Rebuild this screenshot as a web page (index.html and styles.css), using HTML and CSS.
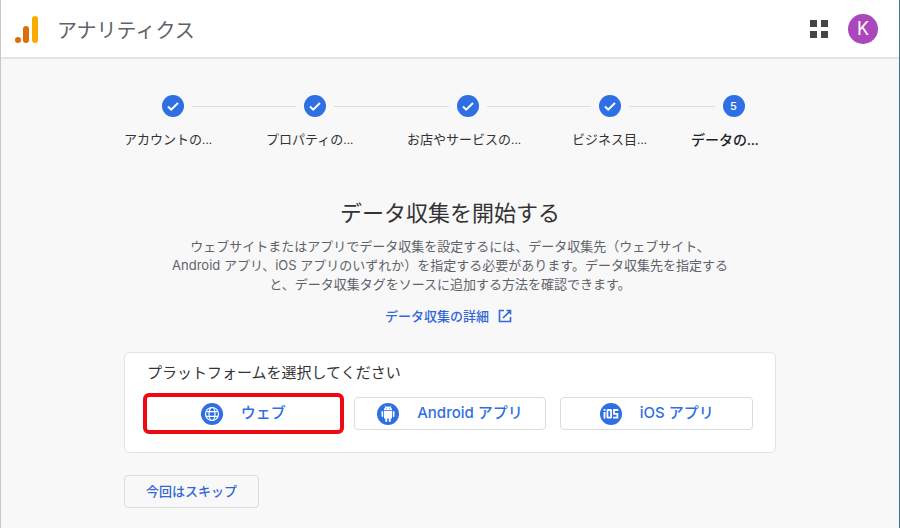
FILE: index.html
```html
<!DOCTYPE html>
<html lang="ja">

<head>
	<meta charset="UTF-8">
	<meta name="viewport" content="width=device-width, initial-scale=1.0">
	<title>アナリティクス</title>
	<link rel="stylesheet" href="styles.css">
</head>

<body>
	<header class="header">
		<svg class="logo" width="24" height="28" viewBox="0 0 24 28">
			<circle cx="3" cy="24" r="3" fill="#dd6f0b" />
			<rect x="8" y="10" width="6" height="17" rx="3" fill="#dd6f0b" />
			<rect x="17" y="0" width="6" height="27" rx="3" fill="#f9ab00" />
		</svg>
		<span class="brand">アナリティクス</span>
		<button class="apps" type="button" aria-label="アプリ">
			<svg width="18" height="18" viewBox="0 0 18 18" fill="#444">
				<rect x="0" y="0" width="7" height="7" />
				<rect x="11" y="0" width="7" height="7" />
				<rect x="0" y="11" width="7" height="7" />
				<rect x="11" y="11" width="7" height="7" />
			</svg>
		</button>
		<button class="avatar" type="button">K</button>
	</header>

	<main class="main">
		<ol class="steps">
			<li class="step">
				<div class="mark"><span class="dot"><svg width="14" height="14" viewBox="0 0 14 14"><path d="M2 7.5l3.2 3.2L12 4" /></svg></span></div>
				<span class="label">アカウントの...</span>
			</li>
			<li class="step">
				<div class="mark"><span class="dot"><svg width="14" height="14" viewBox="0 0 14 14"><path d="M2 7.5l3.2 3.2L12 4" /></svg></span></div>
				<span class="label">プロパティの...</span>
			</li>
			<li class="step">
				<div class="mark"><span class="dot"><svg width="14" height="14" viewBox="0 0 14 14"><path d="M2 7.5l3.2 3.2L12 4" /></svg></span></div>
				<span class="label">お店やサービスの...</span>
			</li>
			<li class="step">
				<div class="mark"><span class="dot"><svg width="14" height="14" viewBox="0 0 14 14"><path d="M2 7.5l3.2 3.2L12 4" /></svg></span></div>
				<span class="label">ビジネス目...</span>
			</li>
			<li class="step current">
				<div class="mark"><span class="dot">5</span></div>
				<span class="label">データの...</span>
			</li>
		</ol>

		<h1>データ収集を開始する</h1>
		<p class="lead">
			ウェブサイトまたはアプリでデータ収集を設定するには、データ収集先（ウェブサイト、<br>
			Android アプリ、iOS アプリのいずれか）を指定する必要があります。データ収集先を指定する<br>
			と、データ収集タグをソースに追加する方法を確認できます。
		</p>
		<a class="more" href="#">データ収集の詳細
			<svg width="14" height="14" viewBox="0 0 14 14" fill="none" stroke="#3367d6" stroke-width="1.6">
				<path d="M6 1.5H1.500v11h11V8M8.500 1.500h4v4M12.500 1.500L5 9" />
			</svg>
		</a>

		<section class="card">
			<h2>プラットフォームを選択してください</h2>
			<div class="platforms">
				<button class="platform selected" type="button">
					<svg width="22" height="22" viewBox="0 0 22 22" fill="none" stroke="#fff" stroke-width="1.200">
						<circle cx="11" cy="11" r="11" fill="#2f6fe4" stroke="none" />
						<circle cx="11" cy="11" r="6.500" />
						<ellipse cx="11" cy="11" rx="3" ry="6.500" />
						<path d="M5 8.700h12M5 13.300h12" />
					</svg>
					<span>ウェブ</span>
				</button>
				<button class="platform" type="button">
					<svg width="22" height="22" viewBox="0 0 22 22" fill="#fff">
						<circle cx="11" cy="11" r="11" fill="#2f6fe4" />
						<path d="M7 7.200a4 3.600 0 0 1 8 0zM7 8h8v7.500H7z" />
						<rect x="4.500" y="8" width="1.700" height="6" rx=".8" />
						<rect x="15.800" y="8" width="1.700" height="6" rx=".8" />
						<rect x="8.300" y="14" width="1.900" height="5" rx=".9" />
						<rect x="11.800" y="14" width="1.900" height="5" rx=".9" />
						<path d="M8 2.800l1.300 2M14 2.800l-1.300 2" stroke="#fff" stroke-width=".7" />
						<circle cx="9.300" cy="5.700" r=".5" fill="#2f6fe4" />
						<circle cx="12.700" cy="5.700" r=".5" fill="#2f6fe4" />
					</svg>
					<span>Android アプリ</span>
				</button>
				<button class="platform" type="button">
					<svg width="22" height="22" viewBox="0 0 22 22" fill="none" stroke="#fff" stroke-width="1.800">
						<circle cx="11" cy="11" r="11" fill="#2f6fe4" stroke="none" />
						<path d="M4.500 9v6.500M4.500 6v1.800" />
						<rect x="7.400" y="7" width="3.700" height="7.600" rx=".6" />
						<path d="M18.300 7h-4.300v3.800h3.400v3.800h-4.300" />
					</svg>
					<span>iOS アプリ</span>
				</button>
			</div>
		</section>

		<button class="skip" type="button">今回はスキップ</button>
	</main>
</body>

</html>
```
FILE: styles.css
```css
* {
	box-sizing: border-box;
}

body {
	margin: 0;
	min-height: 100vh;
	border-left: 1px solid #c8c8c8;
	border-right: 1px solid #3d7393;
	background-color: #f8f8f9;
	color: #333;
	font-family: Inter, "Noto Sans CJK JP", sans-serif;
	font-size: 13px;
}

button {
	font-family: inherit;
	cursor: pointer;
}

.header {
	display: flex;
	align-items: center;
	height: 59px;
	padding: 0 21px 0 14px;
	border-bottom: 2px solid #e4e4e4;
	background-color: #fff;
}

.logo {
	margin-top: 2px;
}

.brand {
	margin-top: 2px;
	margin-left: 18px;
	color: #5f6368;
	font-size: 20px;
}

.apps {
	display: flex;
	margin-left: auto;
	padding: 0;
	border: 0;
	background: none;
}

.avatar {
	width: 30px;
	height: 30px;
	margin-left: 20px;
	padding: 0;
	border: 0;
	border-radius: 50%;
	background-color: #ab47bc;
	color: #fff;
	font-size: 18px;
}

.main {
	max-width: 652px;
	margin: 0 auto;
	padding: 36px 0 20px;
}

/* steps */
.steps {
	display: grid;
	grid-template-columns: 142fr 141fr 165fr 119fr 129fr;
	margin: 0 -22px;
	padding: 0;
	list-style: none;
}

.mark {
	display: flex;
	align-items: center;
	gap: 8px;
}

.mark::before,
.mark::after {
	content: "";
	flex: 1;
	height: 1px;
	background-color: #dadce0;
}

.step:first-child .mark::before,
.step:last-child .mark::after {
	background: none;
}

.dot {
	display: flex;
	align-items: center;
	justify-content: center;
	width: 22px;
	height: 22px;
	border-radius: 50%;
	background-color: #2f6fe4;
	color: #fff;
	font-size: 11px;
	font-weight: 500;
}

.dot path {
	fill: none;
	stroke: #fff;
	stroke-width: 2;
}

.label {
	display: block;
	margin-top: 13px;
	padding-left: 22px;
	font-family: Roboto, "Noto Sans CJK JP", sans-serif;
	line-height: 20px;
	white-space: nowrap;
}

.current .label {
	color: #202124;
	font-size: 14px;
	font-weight: 500;
}

h1 {
	margin: 47px 0 8px;
	color: #333;
	font-size: 22px;
	font-weight: 400;
	line-height: 32px;
	text-align: center;
}

.lead {
	margin: 0;
	color: #5f6368;
	line-height: 19px;
	text-align: center;
}

.more {
	display: flex;
	align-items: center;
	justify-content: center;
	gap: 9px;
	margin-top: 12px;
	padding-right: 3px;
	color: #3367d6;
	font-weight: 500;
	line-height: 20px;
	text-decoration: none;
}

.card {
	margin-top: 26px;
	padding: 10px 22px 22px;
	border: 1px solid #e2e3e5;
	border-radius: 6px;
	background-color: #fff;
}

h2 {
	margin: 0 0 14px;
	font-size: 15px;
	font-weight: 400;
	line-height: 20px;
}

.platforms {
	display: grid;
	grid-template-columns: repeat(3, 1fr);
	gap: 14px;
}

.platform {
	display: flex;
	align-items: center;
	justify-content: center;
	gap: 18px;
	height: 33px;
	padding: 0;
	border: 1px solid #dadce0;
	border-radius: 4px;
	background-color: #fff;
	color: #2f6fe4;
	font-size: 15px;
	font-weight: 500;
}

.platform span {
	padding-bottom: 2px;
	line-height: 20px;
}

.selected {
	border-color: #fff;
	border-radius: 2px;
	outline: 4px solid #ee0a10;
}

.skip {
	height: 33px;
	margin-top: 22px;
	padding: 0 21px 2px;
	border: 1px solid #dadce0;
	border-radius: 4px;
	background-color: #f8f8f9;
	color: #3367d6;
	font-size: 13px;
	font-weight: 500;
}
```
